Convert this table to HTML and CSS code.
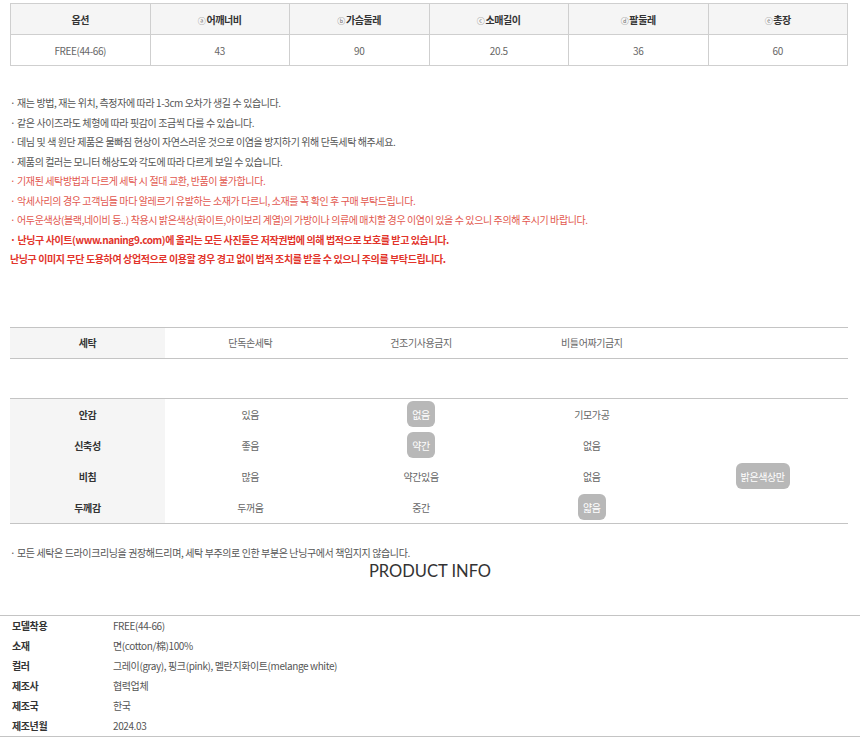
FILE: index.html
```html
<!DOCTYPE html>
<html>

<head>
    <meta charset="UTF-8">
    <title>상품 상세 정보</title>
    <link rel="stylesheet" href="styles.css">
</head>

<body>
    <div class="detail">
        <table class="size-table">
            <tr>
                <th>옵션</th>
                <th><span class="mark">ⓐ</span>어깨너비</th>
                <th><span class="mark">ⓑ</span>가슴둘레</th>
                <th><span class="mark">ⓒ</span>소매길이</th>
                <th><span class="mark">ⓓ</span>팔둘레</th>
                <th><span class="mark">ⓔ</span>총장</th>
            </tr>
            <tr>
                <td>FREE(44-66)</td>
                <td>43</td>
                <td>90</td>
                <td>20.5</td>
                <td>36</td>
                <td>60</td>
            </tr>
        </table>

        <ul class="notes">
            <li>· 재는 방법, 재는 위치, 측정자에 따라 1-3cm 오차가 생길 수 있습니다.</li>
            <li>· 같은 사이즈라도 체형에 따라 핏감이 조금씩 다를 수 있습니다.</li>
            <li>· 데님 및 색 원단 제품은 물빠짐 현상이 자연스러운 것으로 이염을 방지하기 위해 단독세탁 해주세요.</li>
            <li>· 제품의 컬러는 모니터 해상도와 각도에 따라 다르게 보일 수 있습니다.</li>
            <li class="warn">· 기재된 세탁방법과 다르게 세탁 시 절대 교환, 반품이 불가합니다.</li>
            <li class="warn">· 악세사리의 경우 고객님들 마다 알레르기 유발하는 소재가 다르니, 소재를 꼭 확인 후 구매 부탁드립니다.</li>
            <li class="warn">· 어두운색상(블랙,네이비 등..) 착용시 밝은색상(화이트,아이보리 계열)의 가방이나 의류에 매치할 경우 이염이 있을 수 있으니 주의해 주시기 바랍니다.</li>
            <li class="alert">· 난닝구 사이트(www.naning9.com)에 올리는 모든 사진들은 저작권법에 의해 법적으로 보호를 받고 있습니다.</li>
            <li class="alert">난닝구 이미지 무단 도용하여 상업적으로 이용할 경우 경고 없이 법적 조치를 받을 수 있으니 주의를 부탁드립니다.</li>
        </ul>

        <div class="care-table">
            <div class="label">세탁</div>
            <div class="cell">단독손세탁</div>
            <div class="cell">건조기사용금지</div>
            <div class="cell">비틀어짜기금지</div>
            <div class="cell"></div>
        </div>

        <div class="spec-table">
            <div class="label">안감</div>
            <div class="cell">있음</div>
            <div class="cell"><span class="pick">없음</span></div>
            <div class="cell">기모가공</div>
            <div class="cell"></div>

            <div class="label">신축성</div>
            <div class="cell">좋음</div>
            <div class="cell"><span class="pick">약간</span></div>
            <div class="cell">없음</div>
            <div class="cell"></div>

            <div class="label">비침</div>
            <div class="cell">많음</div>
            <div class="cell">약간있음</div>
            <div class="cell">없음</div>
            <div class="cell"><span class="pick">밝은색상만</span></div>

            <div class="label">두께감</div>
            <div class="cell">두꺼움</div>
            <div class="cell">중간</div>
            <div class="cell"><span class="pick">얇음</span></div>
            <div class="cell"></div>
        </div>

        <p class="care-note">· 모든 세탁은 드라이크리닝을 권장해드리며, 세탁 부주의로 인한 부분은 난닝구에서 책임지지 않습니다.</p>
    </div>

    <h2 class="info-title">PRODUCT INFO</h2>

    <table class="info-table">
        <tr>
            <th>모델착용</th>
            <td>FREE(44-66)</td>
        </tr>
        <tr>
            <th>소재</th>
            <td>면(cotton/棉)100%</td>
        </tr>
        <tr>
            <th>컬러</th>
            <td>그레이(gray), 핑크(pink), 멜란지화이트(melange white)</td>
        </tr>
        <tr>
            <th>제조사</th>
            <td>협력업체</td>
        </tr>
        <tr>
            <th>제조국</th>
            <td>한국</td>
        </tr>
        <tr>
            <th>제조년월</th>
            <td>2024.03</td>
        </tr>
    </table>
</body>

</html>
```

FILE: styles.css
```css
body {
    margin: 0;
    background-color: #fff;
    font-family: "Noto Sans CJK KR", "Noto Sans", sans-serif;
    font-size: 10px;
    letter-spacing: -0.4px;
    color: #555;
}

.detail {
    padding: 3px 12px 0 10px;
}

/* 사이즈 표 */
.size-table {
    width: 100%;
    border-collapse: collapse;
    table-layout: fixed;
}

.size-table th,
.size-table td {
    height: 30px;
    padding: 0;
    border: 1px solid #cfcfcf;
    text-align: center;
}

.size-table th {
    background-color: #f5f5f5;
    color: #333;
    font-weight: bold;
}

.size-table td {
    color: #666;
}

.mark {
    font-size: 8px;
    font-weight: normal;
    color: #777;
    margin-right: 1px;
}

/* 안내 문구 */
.notes {
    list-style: none;
    margin: 27px 0 0;
    padding: 0;
}

.notes li {
    line-height: 19.5px;
    color: #555;
}

.notes .warn {
    color: #e2574e;
}

.notes .alert {
    color: #e2342b;
    font-weight: bold;
}

/* 세탁 / 소재 표 */
.care-table,
.spec-table {
    display: grid;
    grid-template-columns: 155px repeat(4, 1fr);
    border-top: 1px solid #c4c4c4;
    border-bottom: 1px solid #c4c4c4;
}

.care-table {
    margin-top: 58px;
}

.spec-table {
    margin-top: 39px;
}

.care-table .label,
.care-table .cell {
    height: 30px;
}

.spec-table .label,
.spec-table .cell {
    height: 31px;
}

.label {
    display: flex;
    align-items: center;
    justify-content: center;
    background-color: #f5f5f5;
    color: #333;
    font-weight: bold;
}

.cell {
    display: flex;
    align-items: center;
    justify-content: center;
    color: #666;
}

.pick {
    display: inline-flex;
    align-items: center;
    height: 26px;
    padding: 0 5px;
    border-radius: 6px;
    background-color: #b8b8b8;
    color: #fff;
}

.care-note {
    margin: 20px 0 0;
    line-height: 18px;
}

/* 상품 정보 */
.info-title {
    margin: 0;
    font-family: Lato, "Noto Sans", sans-serif;
    font-size: 16.5px;
    font-weight: normal;
    letter-spacing: 0;
    line-height: 18px;
    text-align: center;
    color: #333;
}

.info-table {
    width: 100%;
    margin-top: 35px;
    border-collapse: collapse;
    border-top: 1px solid #c4c4c4;
    border-bottom: 1px solid #c4c4c4;
}

.info-table th,
.info-table td {
    height: 20px;
    padding: 0;
    text-align: left;
    vertical-align: middle;
}

.info-table th {
    width: 101px;
    padding-left: 12px;
    color: #333;
    font-weight: bold;
}

.info-table td {
    color: #555;
}
```
